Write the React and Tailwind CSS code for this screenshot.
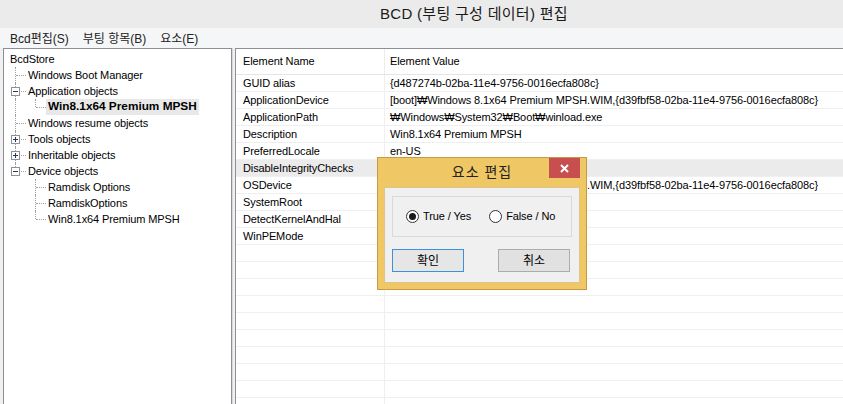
import { useMemo } from 'react'

const tree = [
  { text: 'BcdStore', level: 0 },
  { text: 'Windows Boot Manager', guides: ['tee'] },
  { text: 'Application objects', guides: ['tee'], expander: 'minus' },
  { text: 'Win8.1x64 Premium MPSH', guides: ['pipe', 'elbow'], bold: true, selected: true },
  { text: 'Windows resume objects', guides: ['tee'] },
  { text: 'Tools objects', guides: ['tee'], expander: 'plus' },
  { text: 'Inheritable objects', guides: ['tee'], expander: 'plus' },
  { text: 'Device objects', guides: ['elbow'], expander: 'minus' },
  { text: 'Ramdisk Options', guides: ['blank', 'tee'] },
  { text: 'RamdiskOptions', guides: ['blank', 'tee'] },
  { text: 'Win8.1x64 Premium MPSH', guides: ['blank', 'elbow'] },
]

const elements = [
  ['GUID alias', '{d487274b-02ba-11e4-9756-0016ecfa808c}'],
  ['ApplicationDevice', '[boot]₩Windows 8.1x64 Premium MPSH.WIM,{d39fbf58-02ba-11e4-9756-0016ecfa808c}'],
  ['ApplicationPath', '₩Windows₩System32₩Boot₩winload.exe'],
  ['Description', 'Win8.1x64 Premium MPSH'],
  ['PreferredLocale', 'en-US'],
  ['DisableIntegrityChecks', 'Yes', true],
  ['OSDevice', '[boot]₩Windows 8.1x64 Premium MPSH.WIM,{d39fbf58-02ba-11e4-9756-0016ecfa808c}'],
  ['SystemRoot', '₩Windows'],
  ['DetectKernelAndHal', 'Yes'],
  ['WinPEMode', 'Yes'],
]

const GuideCell = ({ kind, expander, last }) => (
  <div className="relative w-[20px] h-full shrink-0">
    {kind !== 'blank' && (
      <span
        className={`absolute left-[10px] top-0 border-l border-dotted border-[#a0a0a0] ${
          kind === 'elbow' ? 'h-[8px]' : 'h-full'
        }`}
      />
    )}
    {last && kind !== 'blank' && kind !== 'pipe' && (
      <span className="absolute left-[11px] top-[8px] w-[10px] border-t border-dotted border-[#a0a0a0]" />
    )}
    {expander && (
      <span className="absolute left-[6px] top-[4px] w-[9px] h-[9px] border border-[#919191] bg-white">
        <span className="absolute left-[1px] top-[3px] w-[5px] h-[1px] bg-[#1e3a6e]" />
        {expander === 'plus' && <span className="absolute left-[3px] top-[1px] w-[1px] h-[5px] bg-[#1e3a6e]" />}
      </span>
    )}
  </div>
)

const TreeRow = ({ item }) => {
  if (item.level === 0) {
    return (
      <div className="h-[16px] flex items-center">
        <span className="ml-[5px] leading-none">{item.text}</span>
      </div>
    )
  }
  return (
    <div className="h-[16px] flex items-stretch">
      {item.guides.map((g, i) => (
        <GuideCell
          key={i}
          kind={g}
          last={i === item.guides.length - 1}
          expander={i === item.guides.length - 1 ? item.expander : null}
        />
      ))}
      <span
        className={`ml-[1px] px-[2px] flex items-center leading-none ${
          item.selected ? 'bg-[#e8e8e8]' : ''
        } ${item.bold ? 'font-bold text-[11.8px] tracking-[0px]' : ''}`}
      >
        {item.text}
      </span>
    </div>
  )
}

const Radio = ({ checked, label }) => (
  <label className="flex items-center gap-[4px]">
    <span className="w-[13px] h-[13px] rounded-full border border-[#333] bg-white flex items-center justify-center">
      {checked && <span className="w-[7px] h-[7px] rounded-full bg-[#1a1a1a]" />}
    </span>
    <span className="text-[11px] tracking-[-0.1px]">{label}</span>
  </label>
)

const EditDialog = () => (
  <div className="absolute left-[377px] top-[157px] w-[210px] h-[133px] bg-[#efc764] border border-[#c49a45] flex flex-col">
    <div className="h-[29px] relative flex items-center justify-center">
      <span className="text-[14px] text-[#222] tracking-[1px] -mt-[1px]">요소 편집</span>
      <button className="absolute right-[6px] top-0 w-[31px] h-[20px] bg-[#c84f4f] flex items-center justify-center">
        <svg width="9" height="9" viewBox="0 0 9 9">
          <path d="M1 1L8 8M8 1L1 8" stroke="#fff" strokeWidth="2" />
        </svg>
      </button>
    </div>
    <div className="mx-[6px] mb-[6px] flex-1 bg-[#f0f0f0] border border-[#dcc58d] flex flex-col px-[7px] pt-[8px]">
      <div className="h-[41px] border border-[#d9d9d9] flex items-center pl-[13px] gap-[18px]">
        <Radio checked label="True / Yes" />
        <Radio label="False / No" />
      </div>
      <div className="mt-[12px] flex justify-between pr-[2px]">
        <button className="w-[72px] h-[23px] border border-[#3d8fe0] bg-[#e6e6e6] text-[12px]">확인</button>
        <button className="w-[72px] h-[23px] border border-[#acacac] bg-[#e1e1e1] text-[12px]">취소</button>
      </div>
    </div>
  </div>
)

export default function App() {
  const filler = useMemo(() => Array.from({ length: 12 }), [])
  return (
    <div className="relative w-[843px] h-[404px] overflow-hidden bg-[#f0f0f0] text-[11px] text-black font-['Liberation_Sans','Noto_Sans_CJK_KR',sans-serif] flex flex-col">
      <div className="h-[28px] shrink-0 bg-[#ebebeb] flex items-center pl-[380px] pt-[1px]">
        <span className="text-[15px] text-[#1a1a1a] tracking-[0.3px]">BCD (부팅 구성 데이터) 편집</span>
      </div>
      <div className="h-[20px] shrink-0 bg-[#f5f6f7] flex items-center gap-[14px] pl-[10px] pt-[1px] text-[12px] text-[#222]">
        <span>Bcd편집(S)</span>
        <span>부팅 항목(B)</span>
        <span>요소(E)</span>
      </div>
      <div className="flex-1 flex min-h-0">
        <div className="ml-[3px] w-[229px] shrink-0 bg-white border-l border-t border-r border-[#8e8f94] pt-[2px] pl-[1px] overflow-hidden tracking-[-0.1px]">
          {tree.map((item, i) => (
            <TreeRow key={i} item={item} />
          ))}
        </div>
        <div className="w-[3px] shrink-0 border-l border-[#d8d8d8]" />
        <div className="flex-1 bg-white border-l border-t border-[#8e8f94] overflow-hidden tracking-[-0.1px]">
          <div className="h-[26px] flex border-b border-[#e5e5e5]">
            <div className="w-[149px] pl-[7px] flex items-center border-r border-[#ececec]">Element Name</div>
            <div className="pl-[5px] flex items-center">Element Value</div>
          </div>
          {elements.map(([name, value, hi]) => (
            <div key={name} className={`h-[17px] flex border-b border-[#efefef] ${hi ? 'bg-[#ebebeb]' : ''}`}>
              <div className="w-[149px] shrink-0 pl-[7px] pt-[1px] flex items-center border-r border-[#efefef] whitespace-nowrap">{name}</div>
              <div className="pl-[5px] pt-[1px] flex items-center whitespace-nowrap">{value}</div>
            </div>
          ))}
          {filler.map((_, i) => (
            <div key={i} className="h-[17px] flex border-b border-[#efefef]">
              <div className="w-[149px] shrink-0 border-r border-[#efefef]" />
            </div>
          ))}
        </div>
      </div>
      <EditDialog />
    </div>
  )
}
